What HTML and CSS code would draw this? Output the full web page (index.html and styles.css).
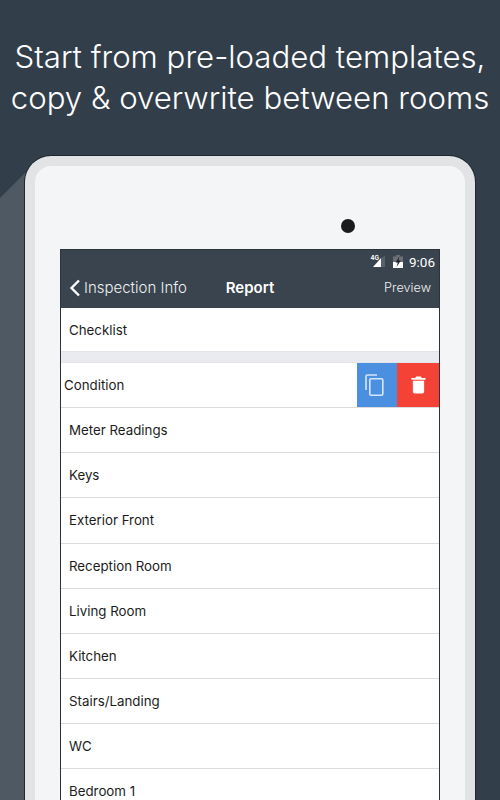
FILE: index.html
```html
<!DOCTYPE html>
<html>
<head>
    <title>Report</title>
    <link rel="stylesheet" href="styles.css">
</head>
<body>
    <div class="long-shadow"></div>
    <h1 class="headline">Start from pre-loaded templates,<br>copy &amp; overwrite between rooms</h1>

    <div class="tablet">
        <div class="tablet-inner">
            <div class="camera-row"><span class="camera"></span></div>
            <div class="screen">
                <div class="status-bar">
                    <span class="net-label">4G</span>
                    <svg class="signal" width="14" height="12" viewBox="0 0 14 12">
                        <path d="M1 11 L9 2 L9 11 Z" fill="#fff"/>
                        <path d="M9 2 L13 0 L13 11 L9 11 Z" fill="#59616a"/>
                    </svg>
                    <svg class="battery" width="10" height="13" viewBox="0 0 10 13">
                        <path d="M3 0 H7 V1.5 H10 V13 H0 V1.5 H3 Z" fill="#6b7077"/>
                        <path d="M0 7 H10 V13 H0 Z" fill="#fff"/>
                        <path d="M6.5 1 L2.6 7.4 H4.8 L3.6 12 L7.8 5.6 H5.4 Z" fill="#1d232a"/>
                    </svg>
                    <span class="clock">9:06</span>
                </div>
                <div class="nav-bar">
                    <div class="nav-back">
                        <svg width="12" height="18" viewBox="0 0 12 18">
                            <path d="M10 1.5 L2.5 9 L10 16.5" fill="none" stroke="#fff" stroke-width="2.4"/>
                        </svg>
                        <span>Inspection Info</span>
                    </div>
                    <div class="nav-title">Report</div>
                    <div class="nav-action">Preview</div>
                </div>

                <div class="row row-first">Checklist</div>
                <div class="section-gap"></div>
                <div class="row row-swiped">
                    <span class="row-text">Condition</span>
                    <div class="btn-copy">
                        <svg width="19" height="22" viewBox="0 0 19 22">
                            <path d="M1 16 V2.5 Q1 1 2.5 1 H12" fill="none" stroke="#d6e6fa" stroke-width="1.6"/>
                            <rect x="4.8" y="4.8" width="13" height="16.4" rx="1.2" fill="none" stroke="#d6e6fa" stroke-width="1.6"/>
                        </svg>
                    </div>
                    <div class="btn-delete">
                        <svg width="15" height="18" viewBox="0 0 16 19">
                            <path d="M5.5 0.5 H10.5 L11.5 2 H15.5 V4 H0.5 V2 H4.5 Z" fill="#fff"/>
                            <path d="M2 5 H14 V16.5 Q14 18.5 12 18.5 H4 Q2 18.5 2 16.5 Z" fill="#fff"/>
                        </svg>
                    </div>
                </div>
                <div class="row">Meter Readings</div>
                <div class="row">Keys</div>
                <div class="row">Exterior Front</div>
                <div class="row">Reception Room</div>
                <div class="row">Living Room</div>
                <div class="row">Kitchen</div>
                <div class="row">Stairs/Landing</div>
                <div class="row">WC</div>
                <div class="row">Bedroom 1</div>
            </div>
        </div>
    </div>
</body>
</html>
```

FILE: styles.css
```css
html, body {
    height: 800px;
    overflow: hidden;
}
body {
    margin: 0;
    padding: 0;
    position: relative;
    background-color: #333e4b;
    font-family: Inter, Roboto, sans-serif;
}

.long-shadow {
    position: absolute;
    left: 0;
    top: 172px;
    width: 30px;
    height: 628px;
    background-color: #4e5963;
    clip-path: polygon(0 26px, 26px 0, 100% 0, 100% 100%, 0 100%);
}

.headline {
    position: relative;
    margin: 0;
    height: 156px;
    padding-top: 37px;
    box-sizing: border-box;
    color: #fff;
    font-family: Inter, sans-serif;
    font-size: 31.2px;
    font-weight: 300;
    line-height: 41px;
    text-align: center;
    white-space: nowrap;
}

.tablet {
    position: relative;
    height: 644px;
    margin: 0 25px;
    box-sizing: border-box;
    padding: 10px 10px 0;
    background-color: #e1e3e5;
    border-radius: 26px 26px 0 0;
    box-shadow: 0 0 0 1px #1e2831;
}
.tablet-inner {
    height: 100%;
    padding: 0 25px;
    background-color: #f4f5f7;
    border-radius: 16px 16px 0 0;
}
.camera-row {
    height: 83px;
    display: flex;
    justify-content: flex-end;
    align-items: flex-end;
    padding-right: 85px;
}
.camera {
    width: 14px;
    height: 14px;
    margin-bottom: 16px;
    border-radius: 50%;
    background-color: #1a1b1d;
}

.screen {
    background-color: #fff;
    border: 1px solid #2c333b;
    border-bottom: none;
    height: 560px;
    overflow: hidden;
}

.status-bar {
    height: 23px;
    display: flex;
    align-items: center;
    justify-content: flex-end;
    padding-right: 4px;
    background-color: #3a444f;
    color: #fff;
}
.net-label {
    font-size: 6px;
    font-weight: 700;
    margin-right: -7px;
    margin-bottom: 9px;
}
.signal {
    margin-right: 7px;
    margin-top: 1px;
}
.battery {
    margin-right: 6px;
    margin-bottom: 1px;
}
.clock {
    font-family: Roboto, sans-serif;
    font-size: 13.5px;
    font-weight: 400;
}

.nav-bar {
    height: 35px;
    display: flex;
    align-items: center;
    position: relative;
    padding: 0 8px 6px;
    box-sizing: border-box;
    background-color: #3a444f;
    color: #fff;
    font-size: 15px;
}
.nav-back {
    display: flex;
    align-items: center;
    gap: 3px;
    font-weight: 300;
    color: #eef0f2;
}
.nav-title {
    position: absolute;
    left: 0;
    right: 0;
    text-align: center;
    font-weight: 600;
}
.nav-action {
    margin-left: auto;
    font-size: 12.7px;
    font-weight: 300;
    color: #eef0f2;
}

.row {
    height: 45.125px;
    box-sizing: border-box;
    display: flex;
    align-items: center;
    padding-left: 8px;
    background-color: #fff;
    border-bottom: 1px solid #dcdcdc;
    color: #1c1c1c;
    font-size: 13.3px;
}
.row-first {
    height: 44px;
    border-bottom: 1px solid #e2e4ea;
}
.section-gap {
    height: 11px;
    background-color: #e9ebf1;
    border-bottom: 1px solid #e2e4ea;
    box-sizing: border-box;
}
.row-swiped {
    padding-left: 3px;
}
.row-text {
    flex: 1;
}
.btn-copy, .btn-delete {
    height: 44px;
    display: flex;
    align-items: center;
    justify-content: center;
    align-self: flex-start;
}
.btn-copy {
    width: 40px;
    padding-right: 5px;
    box-sizing: border-box;
    background-color: #4a8fe0;
}
.btn-delete {
    width: 42px;
    background-color: #f44336;
}
```
